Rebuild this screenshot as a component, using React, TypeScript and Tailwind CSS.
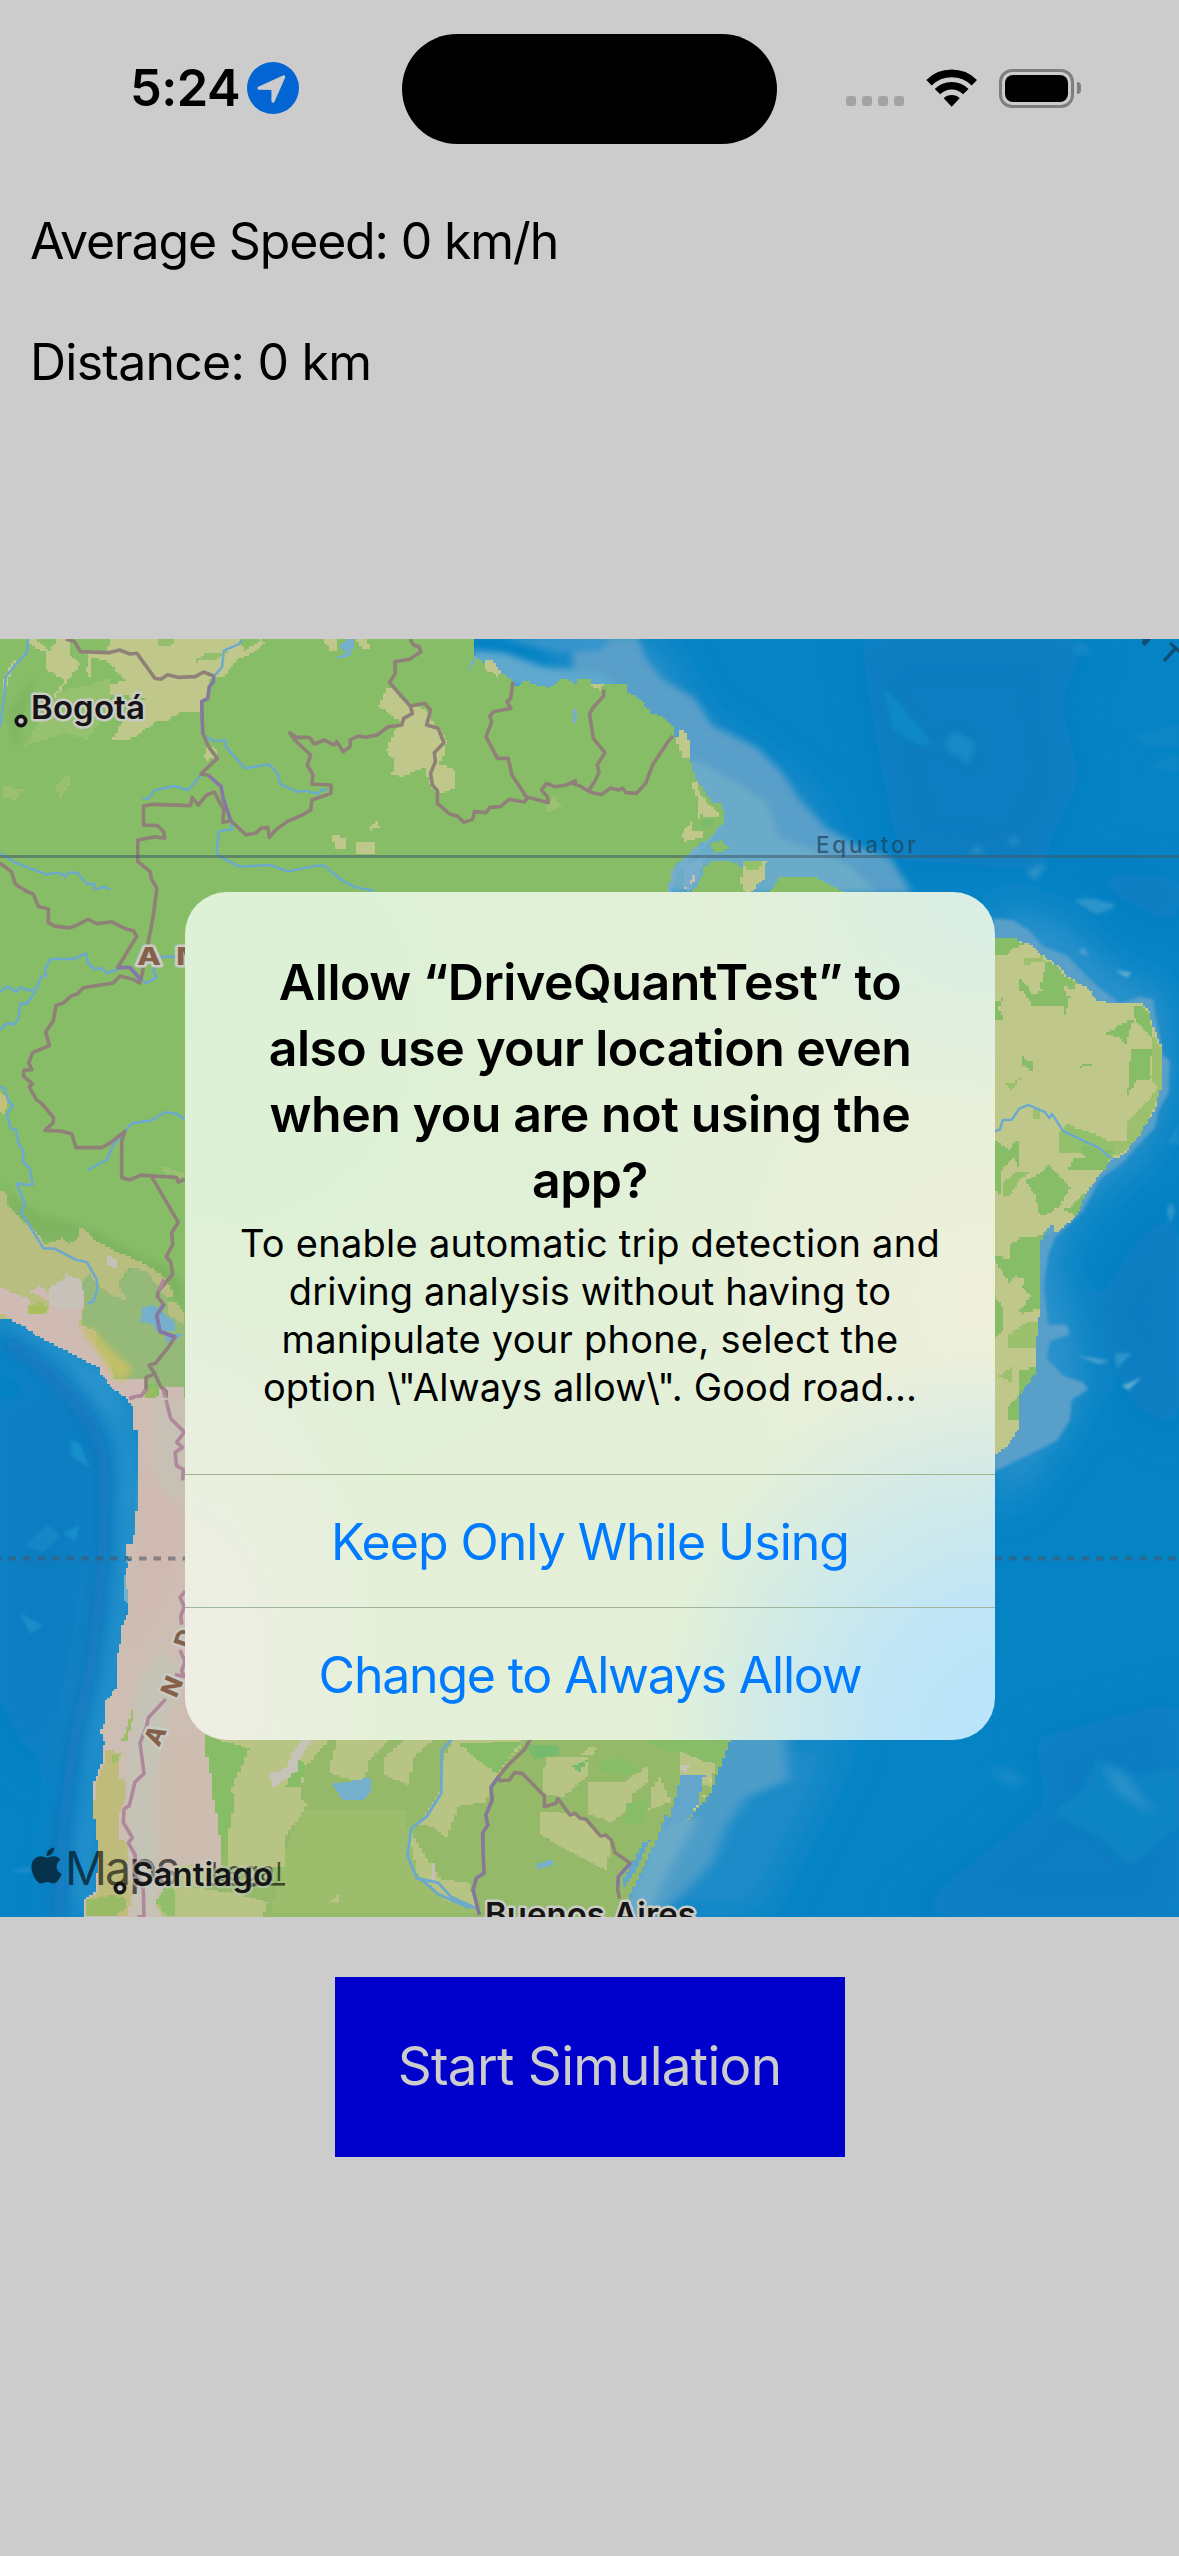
import React from "react";
import { FaApple } from "react-icons/fa";

const GREEN = "#88bd68";
const TAN = "#bfc88a";
const LAKE = "#76afcb";
const BORDER = "#8f8178";
const RIVER = "#6ba9cf";

type Shape = [string, string];

// Snaps an outline to a coarse grid, so land cover gets blocky raster edges.
function stepped(points: string, q = 7): string {
  const snap = (v: number) => Math.round(v / q) * q;
  const pts = points
    .trim()
    .split(/\s+/)
    .map((p) => p.split(",").map(Number).map(snap));
  const out: string[] = [];
  pts.forEach(([x1, y1], i) => {
    const [x2, y2] = pts[(i + 1) % pts.length];
    const n = Math.max(1, Math.min(Math.abs(x2 - x1), Math.abs(y2 - y1)) / q);
    let y = y1;
    out.push(`${x1},${y1}`);
    for (let s = 1; s <= n; s++) {
      const nx = snap(x1 + ((x2 - x1) * s) / n);
      const ny = snap(y1 + ((y2 - y1) * s) / n);
      out.push(`${nx},${y}`, `${nx},${ny}`);
      y = ny;
    }
  });
  return out.join(" ");
}

function Land({ fill, points, q }: { fill: string; points: string; q?: number }) {
  return <polygon fill={fill} points={stepped(points, q)} shapeRendering="crispEdges" />;
}

function Fills({ items, q }: { items: Shape[]; q?: number }) {
  return (
    <>
      {items.map(([fill, points], i) => (
        <Land key={i} fill={fill} points={points} q={q} />
      ))}
    </>
  );
}

function Lines({ items, color, width }: { items: string[]; color: string; width: number }) {
  return (
    <>
      {items.map((points, i) => (
        <polyline
          key={i}
          points={points}
          fill="none"
          stroke={color}
          strokeWidth={width}
          strokeLinejoin="round"
          vectorEffect="non-scaling-stroke"
        />
      ))}
    </>
  );
}

// Each region keeps its own local grid and is placed on the map by a transform.
const NW = "translate(0 630) scale(0.38265 0.33333)";
const NE = "translate(580 630) scale(0.38202 0.33333)";
const W = "translate(0 890) scale(0.33333 0.34439)";
const E = "translate(940 890) scale(0.33333 0.34439)";
const SW = "translate(0 1400) scale(0.33333 0.33801)";
const S = "translate(180 1700) scale(0.63712 0.33333)";

function Ocean() {
  return (
    <g>
      <rect y="639" width="1179" height="1278" fill="#0583c5" />
      <g filter="url(#b20)">
        <path d="M860 639H1090L1060 700L1080 780L1040 860L1179 880V930L1060 870L900 860L880 760Z" fill="#0c7bc0" />
        <path d="M1179 1195L1130 1250L1100 1300L1130 1400L1179 1440Z" fill="#0c7bc0" />
        <path d="M1030 1740L1179 1700V1917H900L990 1850L1050 1800Z" fill="#0d7cc1" />
        <path d="M0 1400L60 1390L90 1460L82 1650L40 1780L0 1700Z" fill="#0a7dc2" />
        <path d="M560 639H655L700 720L800 790L860 892H700L560 700Z" fill="#2a90cb" />
        <path d="M995 905L1060 920L1120 975L1165 990L1175 1080L1150 1150L1080 1210L1055 1260L1075 1320L1085 1390L1060 1440L1020 1490L995 1510Z" fill="#2b92cb" />
        <path d="M720 1735H850L820 1800L760 1917H620Z" fill="#1c8bc8" />
        <path d="M0 1300L120 1380L142 1480L135 1560L118 1680L95 1780L90 1917H60L75 1750L98 1640L112 1520L110 1430L60 1370L0 1335Z" fill="#3a9bd0" />
      </g>
      <path
        d="M0 1340C50 1365 100 1420 104 1470L102 1560L92 1660L74 1740L62 1830L58 1917"
        fill="none"
        stroke="#0a6fba"
        strokeWidth="15"
        filter="url(#b5)"
      />
      <g transform={NE} filter="url(#b5)">
        <polygon
          points="-20,20 150,20 175,90 215,148 300,205 345,285 460,350 530,430 575,510 645,595 730,650 810,680 870,790 0,790"
          fill="#589fc9"
        />
        <polygon points="290,380 400,450 490,520 520,620 700,700 780,790 200,790" fill="#69abc8" />
        <polygon points="790,160 850,240 930,350 880,340 820,300" fill="#118ac6" />
        <polygon points="950,350 980,300 1035,340 1020,405" fill="#158bc6" />
        <polygon points="1290,70 1310,30 1340,70" fill="#1a8bc6" />
        <polygon points="1440,320 1568,280 1568,350 1490,350" fill="#0f87c5" />
        <polygon points="1480,410 1568,370 1568,430" fill="#0f87c5" />
        <polygon points="1170,725 1222,697 1190,750" fill="#3a99c9" />
        <polygon points="1025,672 1035,655 1055,658" fill="#5aa9cf" />
        <polygon points="1125,632 1138,622 1142,645" fill="#5aa9cf" />
        <polygon points="1300,808 1330,808 1400,830 1350,848" fill="#2f95ca" />
      </g>
      <g transform={NW} filter="url(#b5)">
        <polygon points="1235,60 1320,70 1420,110 1570,130 1700,240 1500,200 1340,170 1235,120" fill="#5ea8ce" />
        <polygon points="1300,20 1600,20 1570,60 1460,70" fill="#3594cc" />
      </g>
      <g transform={E} filter="url(#b3)">
        <polygon
          points="160,82 220,88 270,120 310,165 380,190 430,240 480,285 540,330 600,310 640,318 645,360 660,430 668,480 690,495 685,590 655,640 645,690 600,735 550,790 480,840 430,930 345,1010 325,1060 312,1150 320,1220 325,1262 380,1262 390,1290 330,1310 320,1360 370,1410 430,1430 445,1450 395,1480 390,1540 350,1600 160,1690"
          fill="#589fca"
        />
        <polygon points="415,180 430,165 448,195" fill="#4a9fce" />
        <polygon points="525,232 575,240 560,255" fill="#62adcf" />
        <polygon points="545,1440 605,1415 565,1452" fill="#62adcf" />
        <polygon points="410,1352 460,1358 510,1368 475,1376" fill="#4a9fce" />
        <polygon points="525,1345 575,1345 530,1390" fill="#2c94ca" />
        <polygon points="680,930 692,905 706,930 690,970" fill="#2c94ca" />
        <polygon points="400,28 470,30 530,45 470,68" fill="#2c94ca" />
        <polygon points="680,735 712,680 717,740" fill="#1d8dc8" />
      </g>
      <g transform={S} filter="url(#b5)">
        <polygon points="700,100 950,100 955,240 890,290 855,390 835,490 790,580 740,670 600,670" fill="#4e9dc9" />
        <polygon points="760,330 810,360 770,500 730,660 690,660" fill="#6aabc9" />
        <polygon points="1370,340 1420,260 1440,165 1500,230 1568,200 1568,380 1490,500 1450,420" fill="#0f85c5" />
        <polygon points="1455,195 1480,220 1530,350 1470,270" fill="#2a92ca" />
        <polygon points="1280,190 1330,235 1310,265 1280,240" fill="#148ac7" />
      </g>
      <g transform={SW} filter="url(#b3)">
        <polygon points="212,118 240,130 268,200 215,165" fill="#198fcb" />
        <polygon points="75,430 140,370 180,400 130,450" fill="#1387c6" />
        <polygon points="190,395 240,370 225,415" fill="#198fcb" />
        <polygon points="60,630 130,670 90,690" fill="#198fcb" />
        <polygon points="30,1395 90,1380 90,1400" fill="#1a8cc9" />
      </g>
    </g>
  );
}

function North() {
  return (
    <g>
      <g transform={NW}>
        <Land
          fill={GREEN}
          points="0,20 1242,20 1240,85 1300,125 1340,155 1345,165 1365,152 1400,165 1425,172 1465,150 1500,158 1520,152 1540,160 1640,170 1640,860 0,860"
        />
        <Fills
          items={[
            ["#96c16f", "150,180 240,160 290,140 285,240 230,330 180,310 60,350 90,290"],
            [TAN, "40,100 10,210 5,150 20,110 45,75"],
            [TAN, "80,27 100,35 125,60 145,27 172,27 185,80 210,105 150,205 135,200 165,150 120,110 122,60 90,50"],
            [TAN, "285,27 625,27 640,60 680,27 690,40 665,72 620,90 585,140 555,150 545,205 525,220 525,248 470,250 440,275 410,275 365,315 345,330 295,325 310,290 340,240 375,200 290,190 290,160 330,145 280,90 240,80 235,140 225,115 230,70 270,60"],
            ["#93bf6c", "410,27 460,27 445,50 415,55"],
            ["#93bf6c", "510,85 530,68 595,66 570,90 515,97"],
            [TAN, "845,27 885,27 885,60 865,65"],
            [TAN, "930,27 955,27 968,55 950,58"],
            [LAKE, "900,27 932,27 915,80 885,88 882,80 900,60 890,45"],
            [LAKE, "1240,75 1248,90 1235,118 1228,105"],
            [TAN, "1268,90 1290,95 1310,130 1300,138 1270,110"],
            [TAN, "1005,172 1025,175 1065,225 1110,245 1120,265 1150,300 1172,340 1160,375 1150,405 1185,420 1187,475 1150,495 1125,465 1110,415 1060,440 1022,430 1030,385 1008,355 1030,300 1050,270 985,225"],
            [TAN, "536,345 565,365 568,388 545,392 532,370"],
            [TAN, "870,618 905,630 905,655 885,655"],
            [TAN, "930,635 975,635 980,672 925,675"],
            [TAN, "968,590 980,573 992,595 975,602"],
            ["#9cc072", "10,470 60,480 40,510 10,500"],
            ["#9cc072", "145,465 180,430 185,470 160,505"],
            ["#9cc072", "1430,520 1445,495 1468,530 1430,552"],
            [LAKE, "1495,240 1522,258 1500,288"],
          ]}
        />
        <polygon points="20,250 60,180 100,120 70,230 40,370" fill="#7fb562" filter="url(#b5)" />
        <Lines
          color={RIVER}
          width={2.4}
          items={[
            "74,27 70,68 40,105 15,140 10,210 0,290",
            "632,30 625,42 585,62 580,112 558,140",
            "530,312 555,332 590,332 590,350 640,415 703,403 725,430 732,462 778,486 795,482 832,492 840,480 858,478",
            "372,506 388,506 403,482 455,468 492,480 525,436",
            "600,560 607,598 572,604 566,665 575,680 625,710 706,705 752,724 830,706 850,708 870,730 900,755 930,772 978,782",
            "0,668 40,698 120,733 155,728 170,740 180,728 202,728 228,762 246,762 248,780 272,770 330,808 360,817 373,785 405,787 410,818 436,838 515,820",
          ]}
        />
        <Lines
          color={BORDER}
          width={3.6}
          items={[
            "172,27 195,35 210,65 285,68 312,60 340,72 358,70 405,145 420,148 438,134 465,142 510,140 532,126 558,138 558,155 547,170 543,205 527,215 530,310 545,350 568,385 525,432 545,436 578,470 583,505 603,572 642,614 668,610 682,595 700,592 704,622 720,600 750,575 790,555 812,540 815,510 865,490 865,465 815,462 818,435 803,405 812,375 770,330 757,308 775,322 808,322 822,342 848,330 872,345 880,335 897,365 915,350 915,330 935,318 955,322 985,315 1015,290 1050,285 1055,265 1078,250 1072,228 1018,158 1033,130 1032,95 1070,88 1100,65 1095,50 1080,45 1072,27",
            "1072,228 1110,220 1125,240 1115,285 1145,295 1160,338 1135,368 1138,395 1125,430 1130,465 1143,482 1143,520 1175,552 1195,558 1212,577 1235,568 1240,545 1270,548 1280,532 1308,530 1330,508 1370,516 1380,502 1433,518 1430,500 1415,480 1428,460 1450,470 1480,465 1505,452 1545,480 1568,492",
            "1340,155 1335,205 1325,215 1335,235 1290,245 1280,258 1285,275 1270,320 1300,385 1328,385 1338,435 1378,505",
            "1568,205 1545,235 1548,315 1568,365 1560,430 1538,482",
            "603,572 582,577 585,540 572,512 560,486 540,495 518,525 502,502 498,527 400,523 375,528 375,585 412,587 428,605 430,625 405,620 360,630 360,695 393,725 395,745 410,775 405,840 390,905",
            "0,700 30,725 40,762 70,785 85,790 98,830 125,835 128,880 145,890 210,895 232,870 260,885 290,875 320,890 350,905",
          ]}
        />
        <Lines color="#8478a8" width={3} items={["558,138 558,155 547,170 543,205 527,215 530,310", "545,436 578,470 583,505 603,572"]} />
      </g>
      <g transform={NE}>
        <Fills
          items={[
            [GREEN, "-10,150 20,150 25,162 60,180 90,190 125,192 160,215 185,250 215,265 240,290 245,320 280,370 290,400 300,450 340,520 365,517 378,550 378,580 340,625 300,660 255,710 230,790 -10,790"],
            [TAN, "25,160 65,170 55,182"],
            [TAN, "260,298 272,310 285,345 285,386 272,384 250,320"],
            [TAN, "292,452 305,455 310,480 330,515 365,550 362,563 325,550 312,567 305,500"],
            ["#7abb6e", "320,565 360,565 350,590 330,598"],
            [TAN, "285,575 292,600 325,598 322,625 280,640 268,610"],
            [LAKE, "365,598 340,640 300,680 260,730 235,790 222,790 240,720 290,668 330,630"],
            [LAKE, "270,700 330,680 318,745 285,785 275,750"],
            [GREEN, "340,635 365,630 392,660 360,672"],
            [GREEN, "340,690 390,690 425,720 432,790 285,790 315,740 320,710"],
            [TAN, "425,695 490,700 485,750 450,790 432,785 420,740"],
            ["#93c16c", "425,692 480,695 470,718 440,722"],
            [GREEN, "490,790 520,742 580,742 625,752 690,790"],
            ["#c5beb3", "292,733 305,735 298,757 275,778"],
          ]}
        />
        <Lines
          color={BORDER}
          width={3.6}
          items={[
            "62,178 62,198 35,232 25,252 35,325 65,368 45,405 50,425 40,452 22,482",
            "-20,460 0,468 25,485 55,494 80,474 100,480 112,475 120,488 148,490 172,460 190,405 230,335 243,318",
          ]}
        />
      </g>
    </g>
  );
}

function West() {
  return (
    <g>
      <g transform={W}>
        <Land
          fill={GREEN}
          points="0,0 900,0 900,1568 402,1568 398,1500 388,1475 345,1450 310,1410 303,1385 260,1365 200,1335 120,1295 60,1260 0,1228"
        />
        <polygon
          fill="#7fb461"
          filter="url(#b5)"
          points="0,830 30,880 120,940 200,960 290,990 400,1050 500,1090 555,1150 555,1230 470,1130 350,1080 240,1020 120,1020 40,950"
        />
        <Land
          fill="#b7be80"
          points="0,875 15,885 20,915 60,960 110,1000 130,1030 180,1010 200,1028 240,1000 240,978 255,990 290,1025 345,1050 440,1090 490,1130 520,1170 520,1185 490,1180 440,1110 395,1100 355,1140 388,1195 320,1180 300,1150 250,1150 250,1270 0,1240"
        />
        <Land
          fill="#94b978"
          points="395,1100 440,1115 490,1175 555,1260 555,1450 400,1420 340,1430 300,1350 240,1270 250,1160 230,1150 265,1110 290,1150 340,1185 388,1195 355,1140"
        />
        <Land
          fill="#cfbbb3"
          points="0,1155 30,1170 85,1190 90,1230 135,1235 150,1190 130,1180 90,1160 110,1148 145,1175 150,1155 190,1150 195,1112 205,1135 235,1130 240,1165 250,1170 250,1220 237,1268 280,1280 290,1320 320,1360 340,1420 425,1420 432,1450 460,1490 475,1445 555,1445 555,1568 402,1568 398,1500 388,1475 345,1450 310,1410 303,1385 260,1365 200,1335 120,1295 60,1260 0,1228"
        />
        <polygon
          fill="#c2bf66"
          filter="url(#b5)"
          points="240,1270 280,1275 330,1330 400,1390 370,1425 345,1420 310,1360"
        />
        <Fills
          items={[
            ["#c4c07c", "0,590 30,615 15,650 0,640"],
            ["#a9bf5e", "85,1205 110,1200 145,1220 130,1235 85,1225"],
            ["#c6c0b6", "320,1065 350,1080 348,1102 325,1085"],
            ["#c6c2ba", "150,1155 195,1120 235,1135 248,1170 248,1220 180,1215 150,1195"],
            ["#b7be80", "505,1195 530,1205 555,1240 550,1258 505,1225"],
            ["#9cc072", "490,808 555,825 555,835 495,820"],
            ["#98bb60", "432,1440 475,1445 455,1495 440,1475"],
            [LAKE, "430,1212 445,1207 475,1215 490,1235 525,1262 522,1282 478,1280 465,1260 422,1248"],
            [LAKE, "500,1290 552,1290 530,1312 505,1315"],
          ]}
        />
        <Lines
          color={RIVER}
          width={2.5}
          items={[
            "0,296 20,280 50,296 58,283 90,292 110,285 125,250 138,250 135,230 152,200 222,200 258,184 265,215 285,230 300,226 322,241 360,228",
            "0,406 22,386 40,392 55,375 62,328 80,330 110,290",
            "555,192 482,195 460,235 470,253 437,271 400,235",
            "555,666 530,650 495,645 458,668 395,678 372,705 340,740 322,782 263,813",
            "0,573 12,575 25,612 40,626 20,652 32,692 47,695 55,735 72,762 67,785 90,810 98,857 50,852 75,912 62,933 130,1040 165,1042 228,1074 260,1080 290,1130 292,1160 280,1195 263,1200",
          ]}
        />
        <Lines
          color={BORDER}
          width={3.6}
          items={[
            "70,0 100,12 115,48 145,55 145,95 165,105 210,110 235,100 265,85 290,98 335,92 375,112 400,118 410,135 353,225 390,225 422,260 418,270 400,260 360,250 340,270 250,284 232,302 215,307 190,328 168,335 160,380 137,412 148,452 98,472 86,502 96,522 72,523 70,540 97,562 88,572 110,610 125,620 160,660 160,675 135,698 182,700 215,708 228,748 305,748 330,735 375,700 365,730 365,835 390,842 422,828 530,835 535,848 555,840",
            "470,0 460,75 443,160 422,265",
            "455,832 535,965 515,995 518,1030 498,1065 512,1080 518,1115 475,1165 472,1180 492,1205 470,1235 480,1282 525,1298 505,1328 465,1375 447,1380 465,1405 438,1415 438,1450 425,1468 388,1476",
            "462,1400 482,1442 498,1455 500,1495 512,1535 555,1568",
          ]}
        />
        <Lines color="#b0889c" width={3.6} items={["438,1450 425,1468 388,1476", "490,1450 500,1495 512,1535 555,1568", "492,1130 475,1165"]} />
        <Lines color="#8478a8" width={3.6} items={["353,225 390,225 422,260", "490,1205 470,1235 480,1282 525,1298"]} />
      </g>
      <g transform={SW}>
        <Land
          fill="#cdbdb2"
          points="400,-4 405,60 413,120 415,240 410,330 403,400 400,428 375,430 375,465 390,475 383,500 378,560 385,590 388,640 370,665 367,720 350,775 348,855 325,890 315,960 300,985 315,1020 310,1080 285,1125 278,1180 290,1240 297,1300 292,1400 285,1455 262,1480 252,1540 900,1540 900,-4"
        />
        <Land
          fill="#bfbb7b"
          points="315,1033 335,1035 365,1060 360,1120 375,1135 380,1180 360,1230 360,1300 390,1320 380,1400 400,1470 385,1529 255,1529 262,1480 285,1455 292,1400 297,1300 290,1240 278,1180 285,1125 310,1080"
        />
        <g filter="url(#b5)">
          <polygon fill="#c6c1b4" points="470,0 560,0 560,260 500,320 470,200" />
          <polygon fill="#cfb9b0" points="430,200 540,330 520,520 400,740 410,500" />
          <polygon fill="#c5c3b6" points="410,840 480,740 540,780 470,1100 480,1529 400,1529 380,1100" />
        </g>
        <Fills
          items={[
            ["#9fbe68", "392,915 404,918 400,950 382,1005 366,1000 375,965"],
            ["#9fbe68", "338,1050 365,1045 360,1070 340,1078"],
            ["#9abb66", "262,1480 320,1465 370,1480 380,1505 350,1529 255,1529"],
            ["#c2bc80", "515,1015 545,1015 550,1060 515,1058"],
            ["#c2bc80", "522,1075 557,1070 555,1115 515,1110"],
            ["#c2bc80", "500,1290 540,1250 590,1205 627,1200 620,1250 560,1290 500,1350"],
            ["#b7c383", "570,1330 640,1320 720,1340 720,1540 500,1540 470,1490 520,1400"],
            ["#93bf6c", "560,1345 640,1335 640,1370 590,1390"],
            ["#93bf6c", "490,1445 520,1450 525,1529 500,1520 470,1480"],
            [LAKE, "375,470 388,480 378,560 382,600 370,590 372,520"],
          ]}
        />
        <Lines
          color="#b0889c"
          width={3.6}
          items={[
            "498,0 512,55 553,95 530,125 548,140 525,155 530,195 550,205 548,238",
            "555,565 540,585 553,610 542,640 545,665",
            "540,740 555,775 545,800 552,818 525,812",
            "497,885 445,940 440,965 420,1015 432,1105 405,1130 388,1200 372,1210 370,1250 397,1295 385,1310 405,1345 408,1390 430,1450 432,1529 412,1529",
          ]}
        />
      </g>
    </g>
  );
}

function East() {
  return (
    <g transform={E}>
      <Land
        fill={TAN}
        points="100,138 218,140 232,150 280,170 300,190 365,232 380,255 440,285 468,320 500,328 600,331 620,350 640,400 655,450 663,490 663,575 650,630 625,680 590,725 550,770 520,782 480,825 440,880 410,945 360,992 345,985 335,975 320,990 303,1030 300,1090 303,1180 303,1240 297,1290 285,1370 288,1410 245,1460 235,1500 238,1568 200,1620 100,1690"
      />
      <Fills
        items={[
          [GREEN, "160,138 218,140 250,160 215,175 205,190 160,182"],
          [GREEN, "318,208 350,225 370,250 410,275 405,288 365,270 375,310 395,318 380,365 372,335 280,335 262,300 238,285 238,258 255,270 270,300 305,290 298,265"],
          ["#9cc06d", "250,195 300,192 318,208 270,215 250,212"],
          [GREEN, "160,325 187,318 175,350 187,380 160,370"],
          [GREEN, "580,335 605,333 625,355 635,430 600,395 580,365"],
          [GREEN, "495,415 560,378 578,385 562,445 540,430"],
          ["#9cc06d", "635,425 655,455 663,500 663,580 640,650 600,715 550,765 515,780 505,730 550,725 560,675 620,610 650,570 632,540"],
          [GREEN, "572,460 640,460 640,480 632,555 590,560 565,598 550,595 570,545 565,500"],
          [GREEN, "245,480 260,495 280,500 280,523 243,505"],
          [GREEN, "410,515 430,502 458,512 430,518"],
          ["#9cc06d", "197,560 248,545 215,580"],
          ["#9cc06d", "280,635 302,640 300,668 280,660"],
          ["#93c06a", "358,700 375,678 405,690 470,712 520,745 515,775 495,805 430,805 435,765 360,755"],
          [GREEN, "430,740 520,760 495,812 385,805 400,780 435,770"],
          [GREEN, "160,730 205,755 225,728 242,730 240,805 225,775 182,820 180,880 160,870"],
          ["#93c06a", "190,850 225,820 270,822 235,845 210,890 190,890"],
          [GREEN, "258,840 300,820 320,795 390,865 375,890 365,920 325,945 300,935 285,880"],
          [GREEN, "368,925 395,920 425,880 440,885 410,945"],
          [GREEN, "213,1030 235,1008 280,1010 320,985 303,1030 300,1090 303,1220 250,1235 235,1215 270,1175 245,1150 250,1130 230,1120 210,1140 160,1065 215,1075"],
          [GREEN, "160,1175 187,1220 187,1280 160,1310"],
          ["#9cc06d", "205,1290 260,1250 300,1255 285,1330 250,1330 205,1325"],
          [GREEN, "240,1390 285,1380 288,1410 245,1460 235,1500 238,1540 200,1550 205,1500 230,1470"],
          ["#9cc06d", "175,1410 210,1385 220,1430"],
          ["#5fa3cb", "322,985 335,975 342,990 330,1000"],
        ]}
      />
      <Lines
        color={RIVER}
        width={2.4}
        items={["165,700 180,695 188,668 215,667 238,635 265,624 315,645 328,662 336,650 370,700 430,728 475,748 518,782"]}
      />
    </g>
  );
}

function South() {
  return (
    <g transform={S}>
      <Land
        q={5}
        fill="#93b969"
        points="40,100 868,100 850,200 835,280 800,360 765,345 750,420 720,540 690,660 0,660 0,560 60,550"
      />
      <Fills
        q={5}
        items={[
          ["#cdbdb0", "-30,100 40,120 50,300 70,400 65,500 -30,490"],
          ["#9bbd6c", "190,330 350,330 370,540 470,640 140,640 160,470"],
          ["#b8c483", "60,110 240,110 200,200 190,300 200,320 165,420 165,500 80,500 70,350"],
          [GREEN, "40,115 75,130 110,150 80,280 85,340 68,470 60,340 50,220"],
          [GREEN, "185,180 200,200 190,260 165,255"],
          ["#b8c483", "245,120 330,120 300,180 290,250 240,220 235,180"],
          ["#b8c483", "350,120 400,120 370,170 360,255 320,220 320,170"],
          ["#b8c483", "425,120 545,120 510,200 480,310 440,320 420,410 400,380 375,370 410,260 410,180"],
          ["#b8c483", "575,170 640,170 640,230 605,290 575,280 570,200"],
          ["#b8c483", "640,245 700,240 710,320 680,365 640,340"],
          ["#b8c483", "565,335 620,345 680,430 670,510 630,470 600,440 565,400"],
          ["#b8c483", "740,260 750,230 770,310 735,330"],
          ["#b8c483", "785,155 810,170 845,180 835,260 790,230"],
          ["#b8c483", "360,400 390,490 410,540 450,550 465,620 420,600 375,520"],
          ["#b8c483", "0,560 80,580 140,610 130,660 0,660"],
          ["#b8c483", "235,600 243,585 250,610"],
          ["#b8c483", "690,250 730,200 735,250 700,300"],
          ["#b8c483", "640,140 655,150 650,165 630,160"],
          [GREEN, "730,120 865,120 850,190 820,180 790,155 760,150"],
          ["#76ba6e", "545,135 590,140 595,165 560,180"],
          ["#76ba6e", "615,195 638,178 630,215"],
          [GREEN, "440,130 540,120 500,220 470,180"],
          [GREEN, "655,180 700,170 720,220 690,230 665,210"],
          [GREEN, "700,310 740,290 730,370 690,380"],
          ["#c6c3b9", "190,120 208,120 192,180 185,215 150,260 138,220 165,200 175,155"],
          ["#c6c3b9", "785,195 800,200 795,220"],
          [LAKE, "240,250 298,228 298,280 290,302 262,302"],
          [LAKE, "560,490 585,475 585,495 565,508"],
          ["#64a6cb", "785,225 825,232 815,320 800,355 750,400 765,350"],
          ["#64a6cb", "725,425 740,420 715,520 700,560 695,530"],
          ["#c9c795", "832,235 835,245 815,320 797,360 795,350 822,290"],
          ["#c5c1b6", "395,490 402,500 400,540 392,530"],
        ]}
      />
      <Lines
        color={RIVER}
        width={2.8}
        items={["427,118 411,150 410,280 387,350 363,385 357,467 372,535 405,548 425,590 465,625", "380,540 405,582 455,625"]}
      />
      <Lines
        color={BORDER}
        width={3.6}
        items={[
          "550,118 540,150 515,195 500,230 502,242 517,240 525,218 537,220 572,288 572,320 590,310 593,295 612,345 620,340 628,355 637,357 660,408 668,405 677,420 683,458 707,490 688,530 687,570 690,596",
          "500,230 488,262 490,300 480,345 483,375 475,400 477,520 465,535 460,570 470,645",
        ]}
      />
      <Lines color="#8478a0" width={3} items={["500,230 488,262 490,300 480,345 483,375 475,400 477,520 465,535 460,570 470,645", "707,490 688,530 687,560"]} />
    </g>
  );
}

function MapView() {
  const halo = { stroke: "#c9cbc4", strokeWidth: 5, strokeLinejoin: "round" as const, paintOrder: "stroke" as const };
  return (
    <svg viewBox="0 639 1179 1278" className="block h-full w-full" fontFamily="Inter, 'Liberation Sans', sans-serif">
      <defs>
        <filter id="b3" x="-20%" y="-20%" width="140%" height="140%">
          <feGaussianBlur stdDeviation="4" />
        </filter>
        <filter id="b5" x="-30%" y="-30%" width="160%" height="160%">
          <feGaussianBlur stdDeviation="10" />
        </filter>
        <filter id="b20" x="-20%" y="-20%" width="140%" height="140%">
          <feGaussianBlur stdDeviation="18" />
        </filter>
      </defs>
      <Ocean />
      <North />
      <West />
      <East />
      <South />
      <path d="M0 856.5H1179" stroke="#3f5a68" strokeOpacity="0.55" strokeWidth="3" />
      <path d="M-6 1558.5H1179" stroke="#4a5560" strokeOpacity="0.55" strokeWidth="4" strokeDasharray="7.5 7" />

      <text x="816" y="853" fontSize="22.5" fontWeight="500" textLength="100" fill="#1d4058" fillOpacity="0.7">Equator</text>
      <g fill="#12405f" fillOpacity="0.8" fontSize="26" fontWeight="600" textAnchor="middle">
        <text transform="translate(1139 641) rotate(40)">N</text>
        <text transform="translate(1164 661) rotate(42)">T</text>
      </g>

      <g fill="#86614a" fontWeight="800" fontSize="25" textAnchor="middle" {...halo}>
        <text transform="translate(149 965) scale(1.25 1)">A</text>
        <text transform="translate(191 965) scale(1.25 1)">M</text>
        <text transform="translate(163 1739) rotate(-64)">A</text>
        <text transform="translate(180 1690) rotate(-67)">N</text>
        <text transform="translate(193 1641) rotate(-72)">D</text>
      </g>

      <g fill="#151515" fontWeight="600" fontSize="33" {...halo}>
        <text x="31" y="719" textLength="114">Bogotá</text>
        <text x="485" y="1926" textLength="211">Buenos Aires</text>
      </g>
      <circle cx="21" cy="721" r="4.6" fill="#ccc" stroke="#151515" strokeWidth="3.8" />

      <g fill="#000" fillOpacity="0.62">
        <text x="65" y="1885" fontSize="46.5" textLength="115">Maps</text>
        <text x="211" y="1881" fontSize="26" textLength="71">Legal</text>
        <rect x="211" y="1883" width="74" height="2.6" />
      </g>
      <g fill="#151515" fontWeight="600" fontSize="33" {...halo} strokeOpacity="0.55">
        <text x="132" y="1886" textLength="141">Santiago</text>
      </g>
      <circle cx="120" cy="1888" r="4.6" fill="#ccc" stroke="#151515" strokeWidth="3.8" />
      <FaApple x="26" y="1845" size={41} color="#07324b" />
    </svg>
  );
}

function StatusBar() {
  return (
    <header className="grid h-[177px] grid-cols-[402px_375px_402px] pt-[34px]">
      <div className="flex h-[108px] items-center pl-[130px]">
        <span className="w-[117px] text-[50.5px] leading-none font-semibold tracking-[-0.5px] whitespace-nowrap">5:24</span>
        <svg className="h-[52px] w-[52px]" viewBox="247 62 52 52">
          <circle cx="273" cy="88" r="26" fill="#0365d3" />
          <path d="M259 88.2L283.6 77L273 101V88.4Z" fill="#ccc" stroke="#ccc" strokeWidth="3.2" strokeLinejoin="round" />
        </svg>
      </div>
      <div className="h-[110px] rounded-full bg-black" />
      <div className="flex h-[108px] items-center pl-[69px]">
        <div className="flex gap-[6px] pt-[26px]">
          {[0, 1, 2, 3].map((n) => (
            <i key={n} className="h-[10px] w-[10px] rounded-[3px] bg-[#a3a3a3]" />
          ))}
        </div>
        <svg className="ml-[22px] h-[38px] w-[51px]" viewBox="438 116 153 114" fill="none" stroke="#000" strokeWidth="23">
          <path d="M447 157A97 97 0 0 1 583 157" />
          <path d="M472.500 184A60 60 0 0 1 557.500 184" />
          <path d="M491 204A34 34 0 0 1 539 204L515 229Z" fill="#000" stroke="none" />
        </svg>
        <div className="ml-[22px] h-[39px] w-[75px] rounded-[13px] border-3 border-[#7e7e7e] p-[3px]">
          <div className="h-full w-full rounded-[8px] bg-black" />
        </div>
        <div className="ml-[3px] h-[12px] w-[4px] rounded-r-full bg-[#7e7e7e]" />
      </div>
    </header>
  );
}

function PermissionAlert() {
  return (
    <section className="absolute top-[892px] left-[185px] flex h-[848px] w-[810px] flex-col overflow-hidden rounded-[42px] bg-[#e3f0d7] bg-[radial-gradient(ellipse_42%_46%_at_100%_100%,#b9e4fc_0%,#bfe5f6_35%,#bfe5f600_100%),radial-gradient(ellipse_35%_28%_at_100%_0%,#d9eee6_0%,#d9eee600_100%),radial-gradient(ellipse_40%_45%_at_98%_48%,#eeefdb_0%,#eeefdb00_100%),radial-gradient(ellipse_28%_55%_at_0%_92%,#efeee5_0%,#efeee500_100%),radial-gradient(ellipse_75%_65%_at_0%_15%,#dbf1d5_0%,#dbf1d500_100%)] text-center whitespace-nowrap">
      <div className="h-[582px] pt-[57px]">
        <h1 className="text-[50px] leading-[66px] font-semibold">
          <span className="block tracking-[-0.45px]">Allow “DriveQuantTest” to</span>
          <span className="block tracking-[-0.58px]">also use your location even</span>
          <span className="block tracking-[-0.42px]">when you are not using the</span>
          <span className="block tracking-[-0.6px]">app?</span>
        </h1>
        <p className="mt-[6px] text-[38px] leading-[48px]">
          <span className="block tracking-[0.26px]">To enable automatic trip detection and</span>
          <span className="block tracking-[0.1px]">driving analysis without having to</span>
          <span className="block tracking-[0.25px]">manipulate your phone, select the</span>
          <span className="block tracking-[0.1px]">{'option \\"Always allow\\". Good road...'}</span>
        </p>
      </div>
      <button className="h-[133px] border-t border-[#a0b28c] pt-[3px] text-[50px] tracking-[-1px] text-[#007aff]">Keep Only While Using</button>
      <button className="h-[133px] border-t border-[#9fb5a0] pt-[3px] text-[50px] tracking-[-1.22px] text-[#007aff]">Change to Always Allow</button>
    </section>
  );
}

export default function App() {
  return (
    <div className="relative flex h-[2556px] w-[1179px] flex-col overflow-hidden bg-[#cccccc] font-[Inter,'Liberation_Sans',sans-serif] text-black">
      <StatusBar />
      <main className="flex flex-col">
        <div className="flex h-[462px] flex-col gap-[60px] pt-[34px] pl-[30px] text-[50px] leading-[61px]">
          <p className="tracking-[-1.17px]">Average Speed: 0 km/h</p>
          <p className="tracking-[-0.75px]">Distance: 0 km</p>
        </div>
        <div className="h-[1278px] overflow-hidden">
          <MapView />
        </div>
        <button className="mt-[60px] h-[180px] w-[510px] self-center bg-[#0000cc] text-[53px] tracking-[-0.7px] text-[#cccccc]">Start Simulation</button>
      </main>
      <PermissionAlert />
    </div>
  );
}
